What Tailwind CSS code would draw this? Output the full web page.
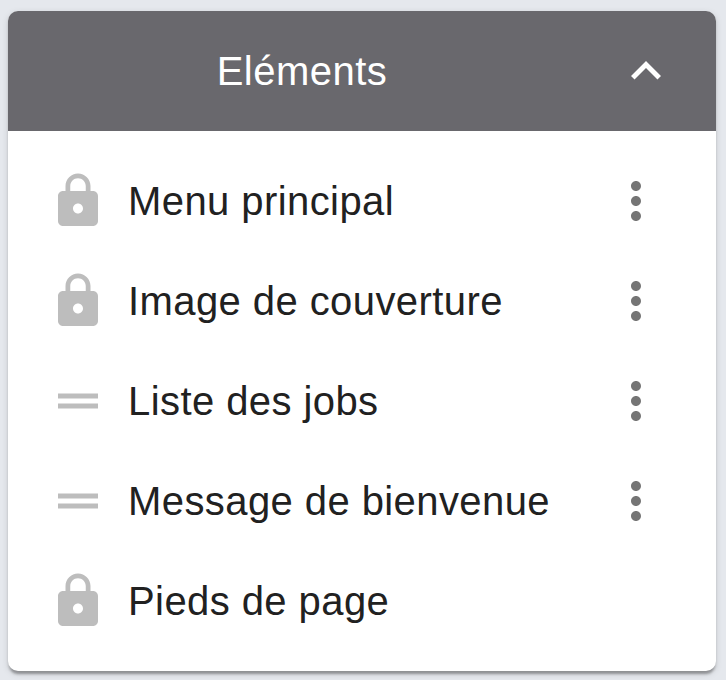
<!DOCTYPE html>
<html lang="fr">
<head>
    <meta charset="UTF-8">
    <title>Eléments</title>
    <script src="https://cdn.jsdelivr.net/npm/@tailwindcss/browser@4"></script>
</head>
<body class="bg-[#e5e8ed] font-['Liberation_Sans',sans-serif]">
    <div class="h-[680px] pt-[11px] px-2">
        <div class="w-[708px] h-[660px] bg-white rounded-[10px] overflow-hidden shadow-[0_5px_2.5px_-2.5px_rgba(0,0,0,0.2),0_2.5px_2.5px_rgba(0,0,0,0.14),0_2.5px_7.5px_rgba(0,0,0,0.12)]">
            <!-- Header -->
            <div class="h-[120px] bg-[#69686d] flex items-center text-white">
                <div class="w-[588px] text-center text-[40px] tracking-[0.48px]">Eléments</div>
                <svg class="w-[60px] h-[60px] ml-5" viewBox="0 0 24 24" fill="#ffffff"><path d="M12 8l-6 6 1.41 1.41L12 10.83l4.59 4.58L18 14z"/></svg>
            </div>
            <!-- Rows -->
            <ul class="py-5 text-[40px] text-[#212121] tracking-[0.42px]">
                <li class="h-[100px] flex items-center pl-10">
                    <svg class="w-[60px] h-[60px]" viewBox="0 0 24 24" fill="#bdbdbd"><path d="M18 8h-1V6c0-2.76-2.24-5-5-5S7 3.24 7 6v2H6c-1.1 0-2 .9-2 2v10c0 1.1.9 2 2 2h12c1.1 0 2-.9 2-2V10c0-1.1-.9-2-2-2zm-6 9c-1.1 0-2-.9-2-2s.9-2 2-2 2 .9 2 2-.9 2-2 2zm3.1-9H8.9V6c0-1.71 1.39-3.1 3.1-3.1 1.71 0 3.1 1.39 3.1 3.1v2z"/></svg>
                    <span class="ml-5 w-[478px]">Menu principal</span>
                    <svg class="w-[60px] h-[60px]" viewBox="0 0 24 24" fill="#757575"><path d="M12 8c1.1 0 2-.9 2-2s-.9-2-2-2-2 .9-2 2 .9 2 2 2zm0 2c-1.1 0-2 .9-2 2s.9 2 2 2 2-.9 2-2-.9-2-2-2zm0 6c-1.1 0-2 .9-2 2s.9 2 2 2 2-.9 2-2-.9-2-2-2z"/></svg>
                </li>
                <li class="h-[100px] flex items-center pl-10">
                    <svg class="w-[60px] h-[60px]" viewBox="0 0 24 24" fill="#bdbdbd"><path d="M18 8h-1V6c0-2.76-2.24-5-5-5S7 3.24 7 6v2H6c-1.1 0-2 .9-2 2v10c0 1.1.9 2 2 2h12c1.1 0 2-.9 2-2V10c0-1.1-.9-2-2-2zm-6 9c-1.1 0-2-.9-2-2s.9-2 2-2 2 .9 2 2-.9 2-2 2zm3.1-9H8.9V6c0-1.71 1.39-3.1 3.1-3.1 1.71 0 3.1 1.39 3.1 3.1v2z"/></svg>
                    <span class="ml-5 w-[478px]">Image de couverture</span>
                    <svg class="w-[60px] h-[60px]" viewBox="0 0 24 24" fill="#757575"><path d="M12 8c1.1 0 2-.9 2-2s-.9-2-2-2-2 .9-2 2 .9 2 2 2zm0 2c-1.1 0-2 .9-2 2s.9 2 2 2 2-.9 2-2-.9-2-2-2zm0 6c-1.1 0-2 .9-2 2s.9 2 2 2 2-.9 2-2-.9-2-2-2z"/></svg>
                </li>
                <li class="h-[100px] flex items-center pl-10">
                    <svg class="w-[60px] h-[60px]" viewBox="0 0 24 24" fill="#bdbdbd"><path d="M20 9H4v2h16V9zM4 15h16v-2H4v2z"/></svg>
                    <span class="ml-5 w-[478px]">Liste des jobs</span>
                    <svg class="w-[60px] h-[60px]" viewBox="0 0 24 24" fill="#757575"><path d="M12 8c1.1 0 2-.9 2-2s-.9-2-2-2-2 .9-2 2 .9 2 2 2zm0 2c-1.1 0-2 .9-2 2s.9 2 2 2 2-.9 2-2-.9-2-2-2zm0 6c-1.1 0-2 .9-2 2s.9 2 2 2 2-.9 2-2-.9-2-2-2z"/></svg>
                </li>
                <li class="h-[100px] flex items-center pl-10">
                    <svg class="w-[60px] h-[60px]" viewBox="0 0 24 24" fill="#bdbdbd"><path d="M20 9H4v2h16V9zM4 15h16v-2H4v2z"/></svg>
                    <span class="ml-5 w-[478px]">Message de bienvenue</span>
                    <svg class="w-[60px] h-[60px]" viewBox="0 0 24 24" fill="#757575"><path d="M12 8c1.1 0 2-.9 2-2s-.9-2-2-2-2 .9-2 2 .9 2 2 2zm0 2c-1.1 0-2 .9-2 2s.9 2 2 2 2-.9 2-2-.9-2-2-2zm0 6c-1.1 0-2 .9-2 2s.9 2 2 2 2-.9 2-2-.9-2-2-2z"/></svg>
                </li>
                <li class="h-[100px] flex items-center pl-10">
                    <svg class="w-[60px] h-[60px]" viewBox="0 0 24 24" fill="#bdbdbd"><path d="M18 8h-1V6c0-2.76-2.24-5-5-5S7 3.24 7 6v2H6c-1.1 0-2 .9-2 2v10c0 1.1.9 2 2 2h12c1.1 0 2-.9 2-2V10c0-1.1-.9-2-2-2zm-6 9c-1.1 0-2-.9-2-2s.9-2 2-2 2 .9 2 2-.9 2-2 2zm3.1-9H8.9V6c0-1.71 1.39-3.1 3.1-3.1 1.71 0 3.1 1.39 3.1 3.1v2z"/></svg>
                    <span class="ml-5 w-[478px]">Pieds de page</span>
                </li>
            </ul>
        </div>
    </div>
</body>
</html>
